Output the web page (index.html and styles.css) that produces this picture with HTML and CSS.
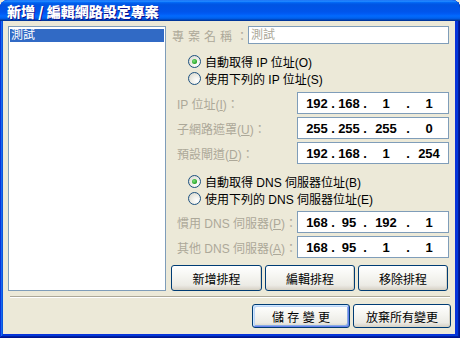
FILE: index.html
```html
<!DOCTYPE html>
<html lang="zh-Hant">
<head>
<meta charset="UTF-8">
<meta name="viewport" content="width=device-width, initial-scale=1.0">
<title>新增 / 編輯網路設定專案</title>
<link rel="stylesheet" href="styles.css">
</head>
<body>
<div class="window">
  <div class="titlebar">
    <span class="title">新增 / 編輯網路設定專案</span>
  </div>
  <div class="client">
    <div class="main">
      <div class="list">
        <div class="item selected">測試</div>
      </div>

      <div class="panel">
        <div class="name-row">
          <span class="name-label"><span class="spaced">專案名稱</span>：</span>
          <div class="textbox">測試</div>
        </div>

        <div class="radios">
          <div class="radio-row"><span class="radio checked"></span>自動取得 IP 位址(O)</div>
          <div class="radio-row"><span class="radio"></span>使用下列的 IP 位址(S)</div>
        </div>

        <div class="fields">
          <div class="field-row">
            <span class="field-label">IP 位址(<u>I</u>)：</span>
            <div class="ip"><span>192</span><i>.</i><span>168</span><i>.</i><span>1</span><i>.</i><span>1</span></div>
          </div>
          <div class="field-row">
            <span class="field-label">子網路遮罩(<u>U</u>)：</span>
            <div class="ip"><span>255</span><i>.</i><span>255</span><i>.</i><span>255</span><i>.</i><span>0</span></div>
          </div>
          <div class="field-row">
            <span class="field-label">預設閘道(<u>D</u>)：</span>
            <div class="ip"><span>192</span><i>.</i><span>168</span><i>.</i><span>1</span><i>.</i><span>254</span></div>
          </div>
        </div>

        <div class="radios">
          <div class="radio-row"><span class="radio checked"></span>自動取得 DNS 伺服器位址(B)</div>
          <div class="radio-row"><span class="radio"></span>使用下列的 DNS 伺服器位址(E)</div>
        </div>

        <div class="fields dns">
          <div class="field-row">
            <span class="field-label">慣用 DNS 伺服器(<u>P</u>)：</span>
            <div class="ip"><span>168</span><i>.</i><span>95</span><i>.</i><span>192</span><i>.</i><span>1</span></div>
          </div>
          <div class="field-row">
            <span class="field-label">其他 DNS 伺服器(<u>A</u>)：</span>
            <div class="ip"><span>168</span><i>.</i><span>95</span><i>.</i><span>1</span><i>.</i><span>1</span></div>
          </div>
        </div>

        <div class="actions">
          <button class="btn">新增排程</button>
          <button class="btn">編輯排程</button>
          <button class="btn">移除排程</button>
        </div>
      </div>
    </div>

    <div class="separator"></div>

    <div class="footer">
      <button class="btn default">儲 存 變 更</button>
      <button class="btn">放棄所有變更</button>
    </div>
  </div>
</div>
</body>
</html>
```

FILE: styles.css
```css
body {
  margin: 0;
  padding: 0;
  font-family: "Liberation Sans", "Noto Sans CJK TC", sans-serif;
  font-size: 12px;
  background-color: #ece9d8;
}

.window {
  width: 460px;
  height: 338px;
  box-sizing: border-box;
  padding: 0 5px 4px 3px;
  background-color: #0831d9;
  border-radius: 8px 8px 0 0;
  box-shadow: inset -1px -1px #00138c, inset 1px 1px #0831d9,
              inset -2px -2px #001ea0, inset 2px 2px #166aee,
              inset -3px -3px #003bda, inset 3px 3px #0855dd;
  display: flex;
  flex-direction: column;
}

.titlebar {
  height: 21px;
  margin: 0 -5px 0 -3px;
  padding-left: 7px;
  display: flex;
  align-items: center;
  border-radius: 8px 8px 0 0;
  background: linear-gradient(#0058ee 0%, #3593ff 4%, #288eff 6%, #127dff 8%,
              #036ffc 10%, #0262ee 14%, #0057e5 20%, #0054e3 24%, #0055eb 56%,
              #005bf5 66%, #026afe 76%, #0062ef 86%, #0052d6 92%, #0040ab 94%,
              #003092 100%);
}

.title {
  color: #fff;
  font-family: "Noto Sans CJK TC", sans-serif;
  font-weight: 900;
  font-size: 14px;
  line-height: 16px;
  text-shadow: 1px 1px #0f1089;
}

.client {
  flex: 1;
  background-color: #ece9d8;
  padding: 5px 5px 0 5px;
}

.main {
  display: flex;
  gap: 5px;
  height: 265px;
}

.list {
  width: 158px;
  box-sizing: border-box;
  border: 1px solid #7f9db9;
  background-color: #fff;
  padding: 2px 1px 0 1px;
}

.item {
  height: 13px;
  line-height: 13px;
  padding-left: 1px;
}

.item.selected {
  background-color: #316ac5;
  color: #fff;
}

.panel {
  flex: 1;
  display: flex;
  flex-direction: column;
  padding-right: 1px;
}

.name-row {
  display: flex;
  align-items: center;
  height: 18px;
}

.name-label {
  width: 77px;
  flex-shrink: 0;
  padding-left: 1px;
  box-sizing: border-box;
  white-space: nowrap;
  color: #aca899;
}

.name-label .spaced {
  letter-spacing: 4px;
}

.textbox {
  flex: 1;
  height: 18px;
  box-sizing: border-box;
  border: 1px solid #7f9db9;
  background-color: #fff;
  color: #aca899;
  padding-left: 2px;
  line-height: 16px;
}

.radios {
  margin-top: 9px;
}

.radio-row {
  height: 17px;
  display: flex;
  align-items: center;
  gap: 4px;
  padding-left: 17px;
  white-space: nowrap;
}

.radio {
  width: 13px;
  height: 13px;
  flex-shrink: 0;
  box-sizing: border-box;
  border: 1px solid #1c5180;
  border-radius: 50%;
  background: radial-gradient(circle at 70% 70%, #fff 0%, #f0f0ea 40%, #d6d4c9 100%);
  display: flex;
  align-items: center;
  justify-content: center;
}

.radio.checked::after {
  content: "";
  width: 5px;
  height: 5px;
  border-radius: 50%;
  background: radial-gradient(circle at 40% 40%, #7ee07e, #21a121 70%);
}

.fields {
  margin-top: 5px;
  display: flex;
  flex-direction: column;
  gap: 3px;
}

.fields.dns {
  margin-top: 4px;
}

.field-row {
  display: flex;
  align-items: center;
  height: 22px;
}

.field-label {
  width: 126px;
  flex-shrink: 0;
  padding-left: 6px;
  box-sizing: border-box;
  white-space: nowrap;
  color: #aca899;
}

.ip {
  width: 152px;
  height: 22px;
  flex-shrink: 0;
  box-sizing: border-box;
  border: 1px solid #7f9db9;
  background-color: #fff;
  padding-left: 5px;
  display: grid;
  grid-template-columns: 28px 4px 28px 4px 38px 6px 36px;
  align-items: center;
  font-weight: bold;
  font-size: 13px;
  color: #000;
}

.ip span,
.ip i {
  text-align: center;
  font-style: normal;
}

.actions {
  margin-top: 7px;
  display: grid;
  grid-template-columns: 91px 90px 90px;
  gap: 3px;
}

.btn {
  height: 26px;
  padding: 0;
  border: 1px solid #003c74;
  border-radius: 3px;
  background: linear-gradient(#fff 0%, #f6f6f2 40%, #ecebe5 80%, #d6d0c5 100%);
  font-family: "Liberation Sans", "Noto Sans CJK TC", sans-serif;
  font-size: 12px;
  color: #000;
  box-shadow: inset -1px -1px #d8d4c6;
}

.separator {
  margin: 5px 0 0 2px;
  border-top: 1px solid #aca899;
  border-bottom: 1px solid #fff;
}

.footer {
  margin-top: 6px;
  margin-right: -1px;
  display: flex;
  justify-content: flex-end;
  gap: 3px;
}

.footer .btn {
  width: 98px;
  height: 24px;
}

.btn.default {
  box-shadow: inset 1px 1px #cee7ff, inset -1px -1px #6982ee,
              inset 2px 2px #bcd4f6, inset -2px -2px #89ade4;
}
```
